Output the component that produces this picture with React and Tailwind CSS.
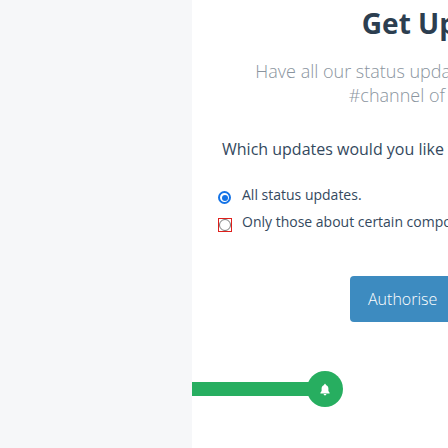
import React from 'react'

const font = { fontFamily: '"Open Sans", "Liberation Sans", sans-serif' }

function Bell() {
  return (
    <svg width="12" height="13" viewBox="0 0 24 26" fill="white">
      <path d="M12 1.5a1.6 1.6 0 0 0-1.6 1.6v.9C7.3 4.7 5.2 7.4 5.2 10.6v5.2L2.8 19.4v1.6h18.4v-1.6l-2.4-3.6v-5.2c0-3.2-2.1-5.9-5.2-6.6v-.9A1.6 1.6 0 0 0 12 1.5z" />
      <path d="M9.2 22.2a2.8 2.8 0 0 0 5.6 0z" />
    </svg>
  )
}

export default function App() {
  return (
    <div className="flex w-full h-[448px] overflow-hidden bg-white" style={font}>
      <aside className="w-[192px] shrink-0 bg-[#f6f7f9]" />

      <main className="flex-1 min-w-0 overflow-hidden pt-[4px]">
        <div className="w-[460px] ml-[26px]">
          <h1 className="text-center text-[28px] leading-[38px] font-bold text-[#2c3e50] whitespace-nowrap">Get Updates</h1>
          <p className="mt-[17px] text-center text-[18px] leading-[24px] font-light text-[#8a949e] whitespace-nowrap">
            Have all our status updates published to a Slack<br />#channel of your choice.
          </p>

          <p className="mt-[31px] ml-[4px] text-[16px] leading-[22px] text-[#34495e] whitespace-nowrap">
            Which updates would you like to receive?
          </p>

          <div className="mt-[25px] flex flex-col gap-[7px] text-[14px] leading-[20px] text-[#34495e]">
            <label className="flex items-start h-[20px] whitespace-nowrap">
              <span className="mt-[6px] w-[13px] h-[13px] rounded-full border-2 border-[#1473e6] bg-white flex items-center justify-center">
                <span className="w-[6px] h-[6px] rounded-full bg-[#1473e6]" />
              </span>
              <span className="ml-[11px]">All status updates.</span>
            </label>
            <label className="flex items-start h-[20px] whitespace-nowrap">
              <span className="mt-[6px] w-[14px] h-[14px] border border-[#e0201c] flex items-center justify-center">
                <span className="w-[12px] h-[12px] rounded-full border border-[#7a7a7a] bg-white" />
              </span>
              <span className="ml-[10px]">Only those about certain components.</span>
            </label>
          </div>

          <button className="mt-[44px] ml-[132px] h-[46px] px-[18px] rounded-[4px] bg-[#3d8bc0] text-white text-[16px] font-light whitespace-nowrap">
            Authorise
          </button>
        </div>

        <div className="mt-[49px] flex items-center">
          <div className="w-[125px] h-[14px] bg-[#27ae60] shrink-0" />
          <div className="-ml-[10px] w-[36px] h-[36px] rounded-full bg-[#27ae60] flex items-center justify-center shrink-0">
            <Bell />
          </div>
        </div>
      </main>
    </div>
  )
}
